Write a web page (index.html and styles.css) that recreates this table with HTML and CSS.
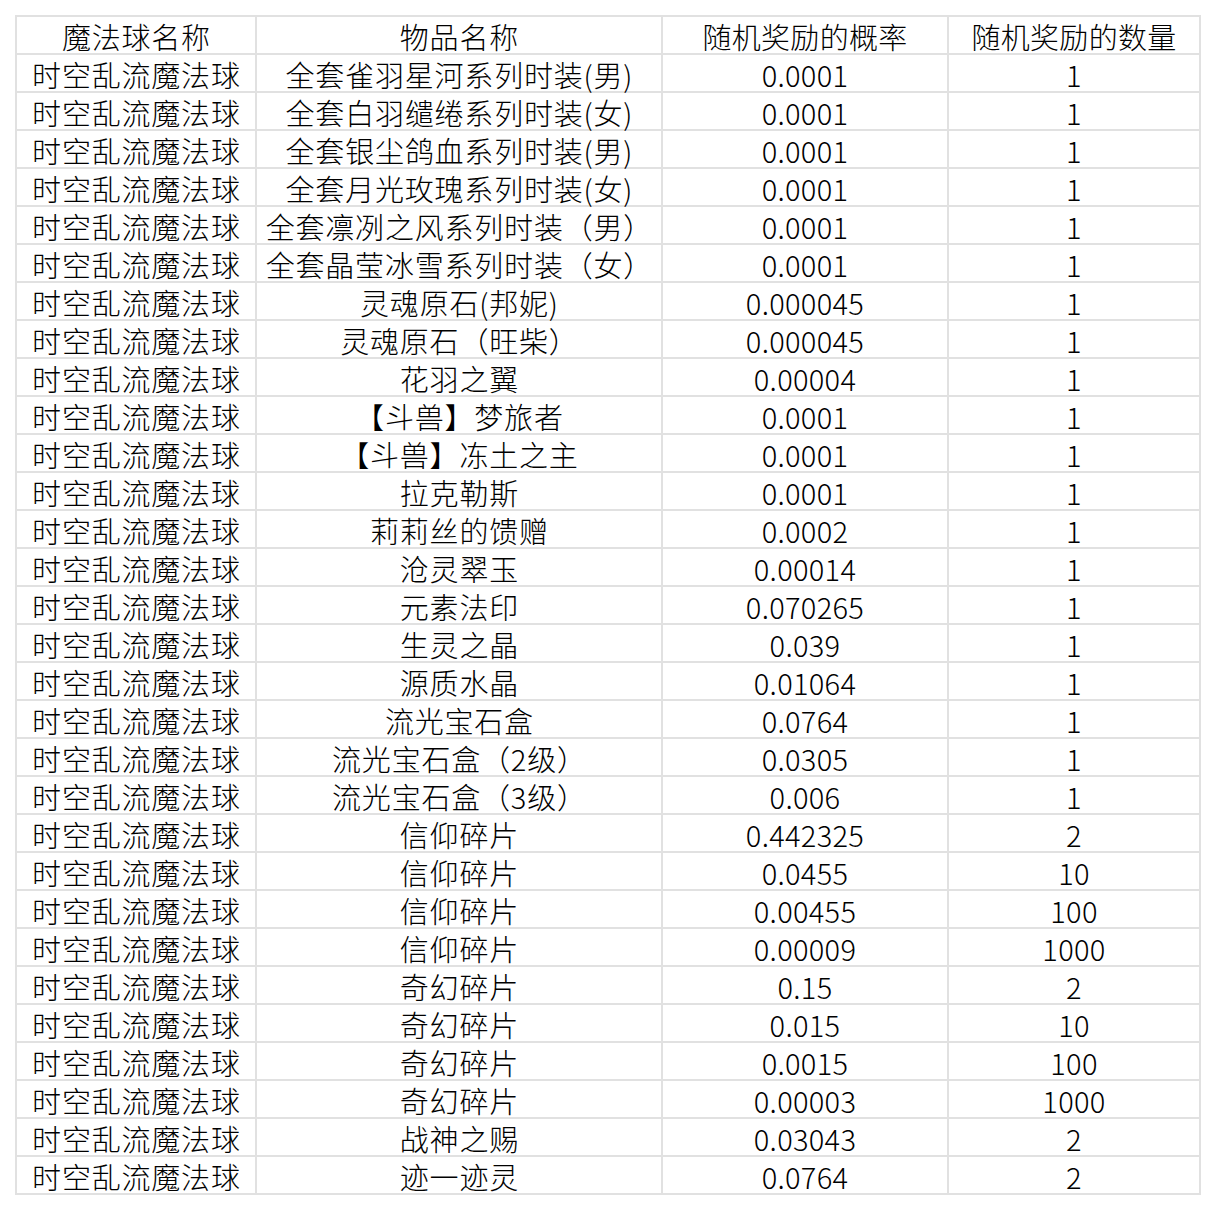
FILE: index.html
```html
<!DOCTYPE html>
<html lang="zh-CN">
<head>
<meta charset="utf-8">
<title>魔法球奖励</title>
<link rel="stylesheet" href="styles.css">
</head>
<body>
<div class="sheet">
  <div class="c">魔法球名称</div><div class="c">物品名称</div><div class="c">随机奖励的概率</div><div class="c">随机奖励的数量</div>
  <div class="c">时空乱流魔法球</div><div class="c">全套雀羽星河系列时装(男)</div><div class="c">0.0001</div><div class="c">1</div>
  <div class="c">时空乱流魔法球</div><div class="c">全套白羽缱绻系列时装(女)</div><div class="c">0.0001</div><div class="c">1</div>
  <div class="c">时空乱流魔法球</div><div class="c">全套银尘鸽血系列时装(男)</div><div class="c">0.0001</div><div class="c">1</div>
  <div class="c">时空乱流魔法球</div><div class="c">全套月光玫瑰系列时装(女)</div><div class="c">0.0001</div><div class="c">1</div>
  <div class="c">时空乱流魔法球</div><div class="c">全套凛冽之风系列时装（男）</div><div class="c">0.0001</div><div class="c">1</div>
  <div class="c">时空乱流魔法球</div><div class="c">全套晶莹冰雪系列时装（女）</div><div class="c">0.0001</div><div class="c">1</div>
  <div class="c">时空乱流魔法球</div><div class="c">灵魂原石(邦妮)</div><div class="c">0.000045</div><div class="c">1</div>
  <div class="c">时空乱流魔法球</div><div class="c">灵魂原石（旺柴）</div><div class="c">0.000045</div><div class="c">1</div>
  <div class="c">时空乱流魔法球</div><div class="c">花羽之翼</div><div class="c">0.00004</div><div class="c">1</div>
  <div class="c">时空乱流魔法球</div><div class="c">【斗兽】梦旅者</div><div class="c">0.0001</div><div class="c">1</div>
  <div class="c">时空乱流魔法球</div><div class="c">【斗兽】冻土之主</div><div class="c">0.0001</div><div class="c">1</div>
  <div class="c">时空乱流魔法球</div><div class="c">拉克勒斯</div><div class="c">0.0001</div><div class="c">1</div>
  <div class="c">时空乱流魔法球</div><div class="c">莉莉丝的馈赠</div><div class="c">0.0002</div><div class="c">1</div>
  <div class="c">时空乱流魔法球</div><div class="c">沧灵翠玉</div><div class="c">0.00014</div><div class="c">1</div>
  <div class="c">时空乱流魔法球</div><div class="c">元素法印</div><div class="c">0.070265</div><div class="c">1</div>
  <div class="c">时空乱流魔法球</div><div class="c">生灵之晶</div><div class="c">0.039</div><div class="c">1</div>
  <div class="c">时空乱流魔法球</div><div class="c">源质水晶</div><div class="c">0.01064</div><div class="c">1</div>
  <div class="c">时空乱流魔法球</div><div class="c">流光宝石盒</div><div class="c">0.0764</div><div class="c">1</div>
  <div class="c">时空乱流魔法球</div><div class="c">流光宝石盒（2级）</div><div class="c">0.0305</div><div class="c">1</div>
  <div class="c">时空乱流魔法球</div><div class="c">流光宝石盒（3级）</div><div class="c">0.006</div><div class="c">1</div>
  <div class="c">时空乱流魔法球</div><div class="c">信仰碎片</div><div class="c">0.442325</div><div class="c">2</div>
  <div class="c">时空乱流魔法球</div><div class="c">信仰碎片</div><div class="c">0.0455</div><div class="c">10</div>
  <div class="c">时空乱流魔法球</div><div class="c">信仰碎片</div><div class="c">0.00455</div><div class="c">100</div>
  <div class="c">时空乱流魔法球</div><div class="c">信仰碎片</div><div class="c">0.00009</div><div class="c">1000</div>
  <div class="c">时空乱流魔法球</div><div class="c">奇幻碎片</div><div class="c">0.15</div><div class="c">2</div>
  <div class="c">时空乱流魔法球</div><div class="c">奇幻碎片</div><div class="c">0.015</div><div class="c">10</div>
  <div class="c">时空乱流魔法球</div><div class="c">奇幻碎片</div><div class="c">0.0015</div><div class="c">100</div>
  <div class="c">时空乱流魔法球</div><div class="c">奇幻碎片</div><div class="c">0.00003</div><div class="c">1000</div>
  <div class="c">时空乱流魔法球</div><div class="c">战神之赐</div><div class="c">0.03043</div><div class="c">2</div>
  <div class="c">时空乱流魔法球</div><div class="c">迹一迹灵</div><div class="c">0.0764</div><div class="c">2</div>
</div>
</body>
</html>
```
FILE: styles.css
```css
html, body {
  margin: 0;
  padding: 0;
  background: #ffffff;
}
body {
  padding: 15px 0 0 15px;
}
.sheet {
  display: grid;
  grid-template-columns: 238px 404px 284px 250px;
  grid-auto-rows: 36px;
  gap: 2px;
  padding: 2px;
  width: max-content;
  background: #e1e1e1;
}
.c {
  box-sizing: border-box;
  padding-top: 3px;
  background: #ffffff;
  color: #000000;
  font-family: "Noto Sans CJK SC", "Noto Sans", sans-serif;
  font-weight: 300;
  font-size: 29px;
  line-height: 33px;
  letter-spacing: 0.3px;
  text-align: center;
  white-space: nowrap;
}
.c:nth-child(4n+1),
.c:nth-child(4n+2) {
  letter-spacing: 0.8px;
  text-indent: 0.8px;
}
```
